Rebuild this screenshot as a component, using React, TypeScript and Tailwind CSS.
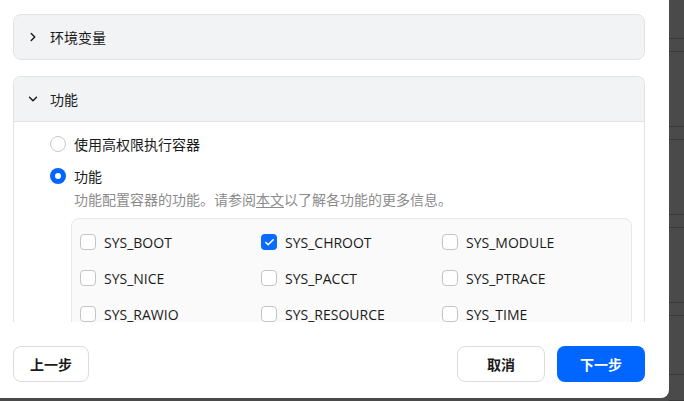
import { ChevronRight, ChevronDown, Check } from "lucide-react";

const caps = [
  { name: "SYS_BOOT", checked: false },
  { name: "SYS_CHROOT", checked: true },
  { name: "SYS_MODULE", checked: false },
  { name: "SYS_NICE", checked: false },
  { name: "SYS_PACCT", checked: false },
  { name: "SYS_PTRACE", checked: false },
  { name: "SYS_RAWIO", checked: false },
  { name: "SYS_RESOURCE", checked: false },
  { name: "SYS_TIME", checked: false },
];

// dark backdrop strip on the right with faint row lines
const stripRows = [39, 13, 75, 13, 75, 13, 75, 13, 59, 26];

function Radio({ checked }: { checked?: boolean }) {
  if (checked) {
    return (
      <span className="w-4 h-4 rounded-full bg-[#0066ff] flex items-center justify-center shrink-0">
        <span className="w-1.5 h-1.5 rounded-full bg-white" />
      </span>
    );
  }
  return <span className="w-4 h-4 rounded-full border border-[#c9c9c9] bg-white shrink-0" />;
}

function Checkbox({ checked }: { checked?: boolean }) {
  if (checked) {
    return (
      <span className="w-4 h-4 rounded-[4px] bg-[#0a6cff] flex items-center justify-center shrink-0">
        <Check size={11} strokeWidth={3.5} className="text-white" />
      </span>
    );
  }
  return <span className="w-4 h-4 rounded-[4px] border border-[#c4c4c4] bg-white shrink-0" />;
}

export default function App() {
  return (
    <div
      className="w-[684px] h-[401px] flex bg-[#4a4a4a] overflow-hidden text-[#1a1a1a]"
      style={{ fontFamily: '"Noto Sans CJK SC", sans-serif' }}
    >
      {/* Modal */}
      <div className="w-[669px] h-[398px] bg-white rounded-br-lg flex flex-col">
        {/* Body */}
        <div className="h-[322px] overflow-hidden pt-[14px] px-[13px] flex flex-col gap-4">
          {/* 环境变量 */}
          <div className="w-[632px] h-[46px] shrink-0 rounded-lg border border-[#e2e3e5] bg-[#f2f3f5] flex items-center px-3 gap-[10px]">
            <ChevronRight size={14} strokeWidth={2.5} />
            <span className="text-[14px] leading-5">环境变量</span>
          </div>

          {/* 功能 */}
          <div className="w-[632px] shrink-0 rounded-t-lg border border-[#e2e3e5] border-b-0 flex flex-col">
            <div className="h-[45px] bg-[#f2f3f5] rounded-t-lg border-b border-[#e2e3e5] flex items-center px-3 gap-[10px]">
              <ChevronDown size={14} strokeWidth={2.5} />
              <span className="text-[14px] leading-5">功能</span>
            </div>
            <div className="pl-9 pr-3 pt-3 flex flex-col">
              <div className="h-5 flex items-center gap-2">
                <Radio />
                <span className="text-[14px]">使用高权限执行容器</span>
              </div>
              <div className="h-5 mt-3 flex items-center gap-2">
                <Radio checked />
                <span className="text-[14px]">功能</span>
              </div>
              <div className="h-5 mt-[3px] pl-6 text-[14px] leading-5 text-[#8c8c8c]">
                功能配置容器的功能。请参阅<span className="underline underline-offset-2">本文</span>以了解各功能的更多信息。
              </div>
              <div className="mt-[9px] ml-[21px] rounded-lg border border-[#e8e8e8] bg-[#fafafa] px-2 pt-[5px] grid grid-cols-3">
                {caps.map((c) => (
                  <div key={c.name} className="h-9 flex items-center gap-2">
                    <Checkbox checked={c.checked} />
                    <span className="text-[14px] font-['Open_Sans']">{c.name}</span>
                  </div>
                ))}
              </div>
            </div>
          </div>
        </div>

        {/* Footer */}
        <div className="flex items-center pl-[13px] pr-6 pt-6">
          <button className="w-[76px] h-9 rounded-lg border border-[#dcdcdc] bg-white text-[14px] font-bold">
            上一步
          </button>
          <div className="flex-1" />
          <button className="w-[88px] h-9 rounded-lg border border-[#dcdcdc] bg-white text-[14px] font-bold">
            取消
          </button>
          <button className="w-[88px] h-9 ml-3 rounded-lg bg-[#0066ff] text-white text-[14px] font-bold">
            下一步
          </button>
        </div>
      </div>

      {/* Backdrop strip */}
      <div className="flex-1 flex flex-col">
        {stripRows.map((h, i) => (
          <div key={i} className="border-b border-[#3a3a3a]" style={{ height: h }} />
        ))}
      </div>
    </div>
  );
}
